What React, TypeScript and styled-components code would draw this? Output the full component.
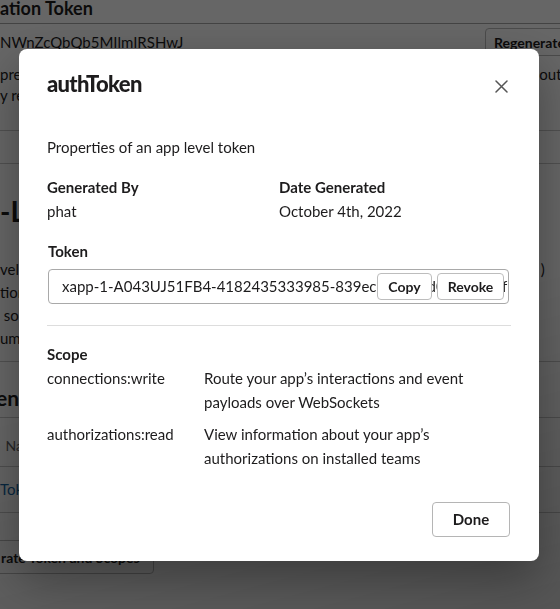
import React from 'react';
import styled, { createGlobalStyle } from 'styled-components';

const GlobalStyle = createGlobalStyle`
  *, *::before, *::after {
    box-sizing: border-box;
  }
  html, body {
    margin: 0;
    padding: 0;
    background: #ffffff;
  }
  body {
    font-family: Lato, 'Noto Sans', sans-serif;
    color: #1d1c1d;
    overflow: hidden;
  }
`;

/* ---------- page behind the dialog ---------- */

const StyledPage = styled.div`
  height: 613px;
  margin-top: -4px;
  overflow: hidden;
  font-size: 15px;
`;

const SectionTitle = styled.h3`
  margin: 0;
  height: 28px;
  font-size: 18px;
  font-weight: 700;
  line-height: 24px;
  border-bottom: 1px solid #a9a9a9;
`;

const SecretRow = styled.div`
  display: flex;
  align-items: center;
  justify-content: space-between;
  height: 36px;
`;

const RegenerateButton = styled.button`
  width: 90px;
  height: 28px;
  margin-right: -15px;
  padding: 0 8px;
  text-align: left;
  border: 1px solid #bbbbbb;
  border-radius: 4px;
  background: #ffffff;
  font-family: inherit;
  font-size: 14px;
  font-weight: 700;
  color: #1d1c1d;
`;

const TextBlock = styled.div<{ $lineHeight: number; $top: number }>`
  margin-top: ${(p) => p.$top}px;
  line-height: ${(p) => p.$lineHeight}px;
`;

const TextLine = styled.div`
  display: flex;
  justify-content: space-between;
  white-space: nowrap;
`;

const Overflowing = styled.span<{ $out: number }>`
  margin-right: -${(p) => p.$out}px;
`;

const Rule = styled.div<{ $top: number }>`
  margin-top: ${(p) => p.$top}px;
  border-top: 1px solid #c8c8c8;
`;

const PageHeading = styled.h2<{ $size: number; $top: number; $shift?: number }>`
  margin: ${(p) => p.$top}px 0 0 ${(p) => -(p.$shift ?? 0)}px;
  font-size: ${(p) => p.$size}px;
  font-weight: 700;
  line-height: ${(p) => Math.round(p.$size * 1.3)}px;
  white-space: nowrap;
`;

const TableHead = styled.div`
  padding: 18px 0 10px 2px;
  font-size: 14px;
  line-height: 20px;
  color: #616061;
  white-space: nowrap;
`;

const TableCell = styled.div`
  padding: 12px 0 13px;
  line-height: 20px;
`;

const PageLink = styled.a`
  color: #1264a3;
  text-decoration: none;
`;

const GenerateButton = styled.button`
  display: block;
  margin: 27px 0 0 -4px;
  height: 34px;
  padding: 0 13px 0 4px;
  border: 1px solid #bbbbbb;
  border-radius: 4px;
  background: #ffffff;
  font-family: inherit;
  font-size: 14px;
  font-weight: 700;
  color: #1d1c1d;
`;

/* ---------- dialog ---------- */

const Overlay = styled.div`
  position: fixed;
  inset: 0;
  display: flex;
  align-items: center;
  justify-content: center;
  padding-right: 2px;
  background: linear-gradient(165deg, rgba(0, 0, 0, 0.6) 55%, rgba(0, 0, 0, 0.67) 100%);
`;

const Modal = styled.div`
  display: flex;
  flex-direction: column;
  width: 520px;
  height: 512px;
  background: #ffffff;
  border-radius: 8px;
  box-shadow: 0 18px 48px rgba(0, 0, 0, 0.35);
`;

const ModalHeader = styled.div`
  display: flex;
  align-items: center;
  justify-content: space-between;
  height: 70px;
  padding: 0 26px 0 28px;
`;

const ModalTitle = styled.h1`
  margin: 0;
  font-size: 22px;
  font-weight: 900;
  line-height: 28px;
  letter-spacing: -0.7px;
`;

const CloseButton = styled.button`
  display: flex;
  align-items: center;
  justify-content: center;
  width: 24px;
  height: 24px;
  margin-top: 5px;
  padding: 0;
  border: none;
  background: none;
  color: #555555;
`;

const ModalBody = styled.div`
  padding: 16px 28px 0;
  font-size: 15px;
  line-height: 24px;
`;

const FieldGrid = styled.div`
  display: grid;
  grid-template-columns: 1fr 1fr;
  margin-top: 16px;
`;

const Label = styled.div<{ $inset?: boolean }>`
  font-weight: 700;
  padding-left: ${(p) => (p.$inset ? 1 : 0)}px;
`;

const TokenBlock = styled.div`
  margin-top: 16px;
`;

const TokenField = styled.div`
  position: relative;
  height: 35px;
  margin: 6px 2px 0 1px;
  border: 1px solid #a9a9a9;
  border-radius: 4px;
  overflow: hidden;
`;

const TokenText = styled.div`
  padding-left: 13px;
  line-height: 33px;
  white-space: nowrap;
`;

const TokenActions = styled.div`
  position: absolute;
  top: 3px;
  right: 4px;
  display: flex;
  gap: 5px;
`;

const SmallButton = styled.button<{ $width: number }>`
  width: ${(p) => p.$width}px;
  height: 27px;
  padding: 0;
  border: 1px solid #bdbdbd;
  border-radius: 4px;
  background: #ffffff;
  font-family: inherit;
  font-size: 14px;
  font-weight: 700;
  color: #1d1c1d;
`;

const Divider = styled.hr`
  margin: 21px 0 0;
  border: none;
  border-top: 1px solid #dddddd;
`;

const ScopeTitle = styled(Label)`
  margin-top: 16px;
`;

const ScopeList = styled.div`
  display: grid;
  grid-template-columns: 157px 1fr;
  row-gap: 8px;
`;

const ModalFooter = styled.div`
  display: flex;
  justify-content: flex-end;
  margin-top: auto;
  padding: 0 29px 24px 28px;
`;

const DoneButton = styled.button`
  width: 78px;
  height: 35px;
  padding: 0;
  border: 1px solid #b5b5b5;
  border-radius: 4px;
  background: #ffffff;
  font-family: inherit;
  font-size: 15px;
  font-weight: 700;
  color: #1d1c1d;
`;

const scopes = [
  {
    name: 'connections:write',
    text: 'Route your app\u2019s interactions and event payloads over WebSockets',
  },
  {
    name: 'authorizations:read',
    text: 'View information about your app\u2019s authorizations on installed teams',
  },
];

const CloseIcon = () => (
  <svg width="13" height="13" viewBox="0 0 13 13" fill="none">
    <path d="M1 1L12 12M12 1L1 12" stroke="currentColor" strokeWidth="1.5" strokeLinecap="round" />
  </svg>
);

const BackgroundPage = () => (
  <StyledPage>
    <SectionTitle>ation Token</SectionTitle>
    <SecretRow>
      <span>NWnZcQbQb5MIlmIRSHwJ</span>
      <RegenerateButton>Regenerate</RegenerateButton>
    </SecretRow>
    <TextBlock $lineHeight={21} $top={4}>
      <TextLine>
        <span>pre</span>
        <Overflowing $out={38}>out what</Overflowing>
      </TextLine>
      <TextLine>
        <span>y re</span>
      </TextLine>
    </TextBlock>
    <Rule $top={24} />
    <Rule $top={32} />
    <PageHeading $size={28} $top={29}>-Level Tokens</PageHeading>
    <TextBlock $lineHeight={23} $top={29}>
      <TextLine>
        <span>vel</span>
        <Overflowing $out={0}>)&nbsp;&nbsp;&nbsp;&nbsp;</Overflowing>
      </TextLine>
      <TextLine>
        <span>tion</span>
      </TextLine>
      <TextLine>
        <span>&nbsp;so</span>
      </TextLine>
      <TextLine>
        <span>um</span>
      </TextLine>
    </TextBlock>
    <Rule $top={11} />
    <PageHeading $size={21} $top={22} $shift={4}>ens</PageHeading>
    <Rule $top={6} />
    <TableHead>&nbsp;Name</TableHead>
    <Rule $top={0} />
    <TableCell>
      <PageLink>Token</PageLink>
    </TableCell>
    <Rule $top={0} />
    <GenerateButton>rate Token and Scopes</GenerateButton>
  </StyledPage>
);

export default function App() {
  return (
    <>
      <GlobalStyle />
      <BackgroundPage />
      <Overlay>
        <Modal>
          <ModalHeader>
            <ModalTitle>authToken</ModalTitle>
            <CloseButton aria-label="Close">
              <CloseIcon />
            </CloseButton>
          </ModalHeader>
          <ModalBody>
            <div>Properties of an app level token</div>
            <FieldGrid>
              <div>
                <Label>Generated By</Label>
                <div>phat</div>
              </div>
              <div>
                <Label>Date Generated</Label>
                <div>October 4th, 2022</div>
              </div>
            </FieldGrid>
            <TokenBlock>
              <Label $inset>Token</Label>
              <TokenField>
                <TokenText>xapp-1-A043UJ51FB4-4182435333985-839ec6a5fl29d0e7a95c3f6b8d4e2a1c7f09b3d5e8a6c4f2b1d9e7a35</TokenText>
                <TokenActions>
                  <SmallButton $width={55}>Copy</SmallButton>
                  <SmallButton $width={67}>Revoke</SmallButton>
                </TokenActions>
              </TokenField>
            </TokenBlock>
            <Divider />
            <ScopeTitle>Scope</ScopeTitle>
            <ScopeList>
              {scopes.map((scope) => (
                <React.Fragment key={scope.name}>
                  <div>{scope.name}</div>
                  <div>{scope.text}</div>
                </React.Fragment>
              ))}
            </ScopeList>
          </ModalBody>
          <ModalFooter>
            <DoneButton>Done</DoneButton>
          </ModalFooter>
        </Modal>
      </Overlay>
    </>
  );
}
